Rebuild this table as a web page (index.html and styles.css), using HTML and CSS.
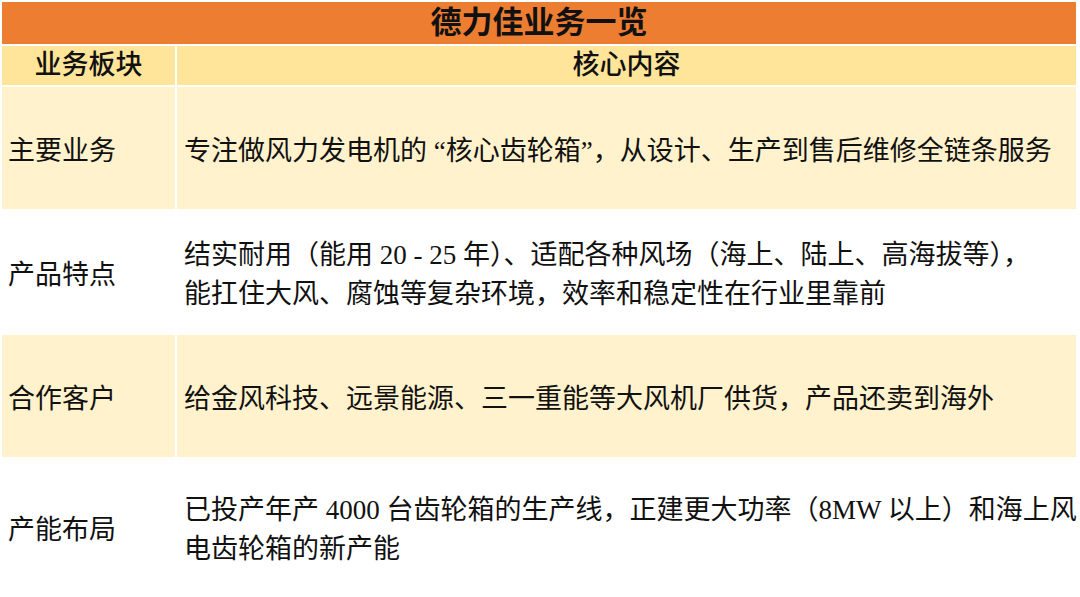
FILE: index.html
```html
<!DOCTYPE html>
<html lang="zh-CN">
<head>
<meta charset="utf-8">
<title>德力佳业务一览</title>
<link rel="stylesheet" href="styles.css">
</head>
<body>
<table class="biz">
  <colgroup>
    <col class="col-a">
    <col class="col-b">
  </colgroup>
  <thead>
    <tr class="title-row"><th colspan="2" class="title">德力佳业务一览</th></tr>
    <tr class="head-row"><th class="h">业务板块</th><th class="h">核心内容</th></tr>
  </thead>
  <tbody>
    <tr class="row odd">
      <td class="k">主要业务</td>
      <td class="v">专注做风力发电机的 “核心齿轮箱”，从设计、生产到售后维修全链条服务</td>
    </tr>
    <tr class="row even">
      <td class="k">产品特点</td>
      <td class="v">结实耐用（能用 20 - 25 年）、适配各种风场（海上、陆上、高海拔等），<br>能扛住大风、腐蚀等复杂环境，效率和稳定性在行业里靠前</td>
    </tr>
    <tr class="row odd">
      <td class="k">合作客户</td>
      <td class="v">给金风科技、远景能源、三一重能等大风机厂供货，产品还卖到海外</td>
    </tr>
    <tr class="row even last">
      <td class="k">产能布局</td>
      <td class="v">已投产年产 4000 台齿轮箱的生产线，正建更大功率（8MW 以上）和海上风<br>电齿轮箱的新产能</td>
    </tr>
  </tbody>
</table>
</body>
</html>
```

FILE: styles.css
```css
html, body {
  margin: 0;
  padding: 0;
  background: #ffffff;
  overflow: hidden;
}
body {
  font-family: "Liberation Serif", "Noto Sans CJK SC", serif;
  color: #111111;
}
.biz {
  border-collapse: separate;
  border-spacing: 2px;
  width: 1078px;
  table-layout: fixed;
}
.col-a { width: 173px; }
.col-b { width: 899px; }
.biz th, .biz td {
  padding: 0;
  white-space: nowrap;
}
.title {
  background: #ed7d31;
  height: 42px;
  font-size: 31px;
  font-weight: 700;
  text-align: center;
  vertical-align: middle;
  line-height: 42px;
}
.h {
  background: #fee599;
  height: 39px;
  font-size: 27px;
  font-weight: 500;
  text-align: center;
  vertical-align: middle;
  line-height: 39px;
}
.row td {
  height: 116px;
  padding-top: 6px;
  vertical-align: middle;
  font-size: 27px;
  line-height: 39px;
}
.row.last td {
  height: 130px;
}
.odd td { background: #fff2cc; }
.even td { background: #ffffff; }
.biz .k {
  text-align: left;
  padding-left: 6px;
}
.biz .v {
  text-align: left;
  padding-left: 7px;
}
```
